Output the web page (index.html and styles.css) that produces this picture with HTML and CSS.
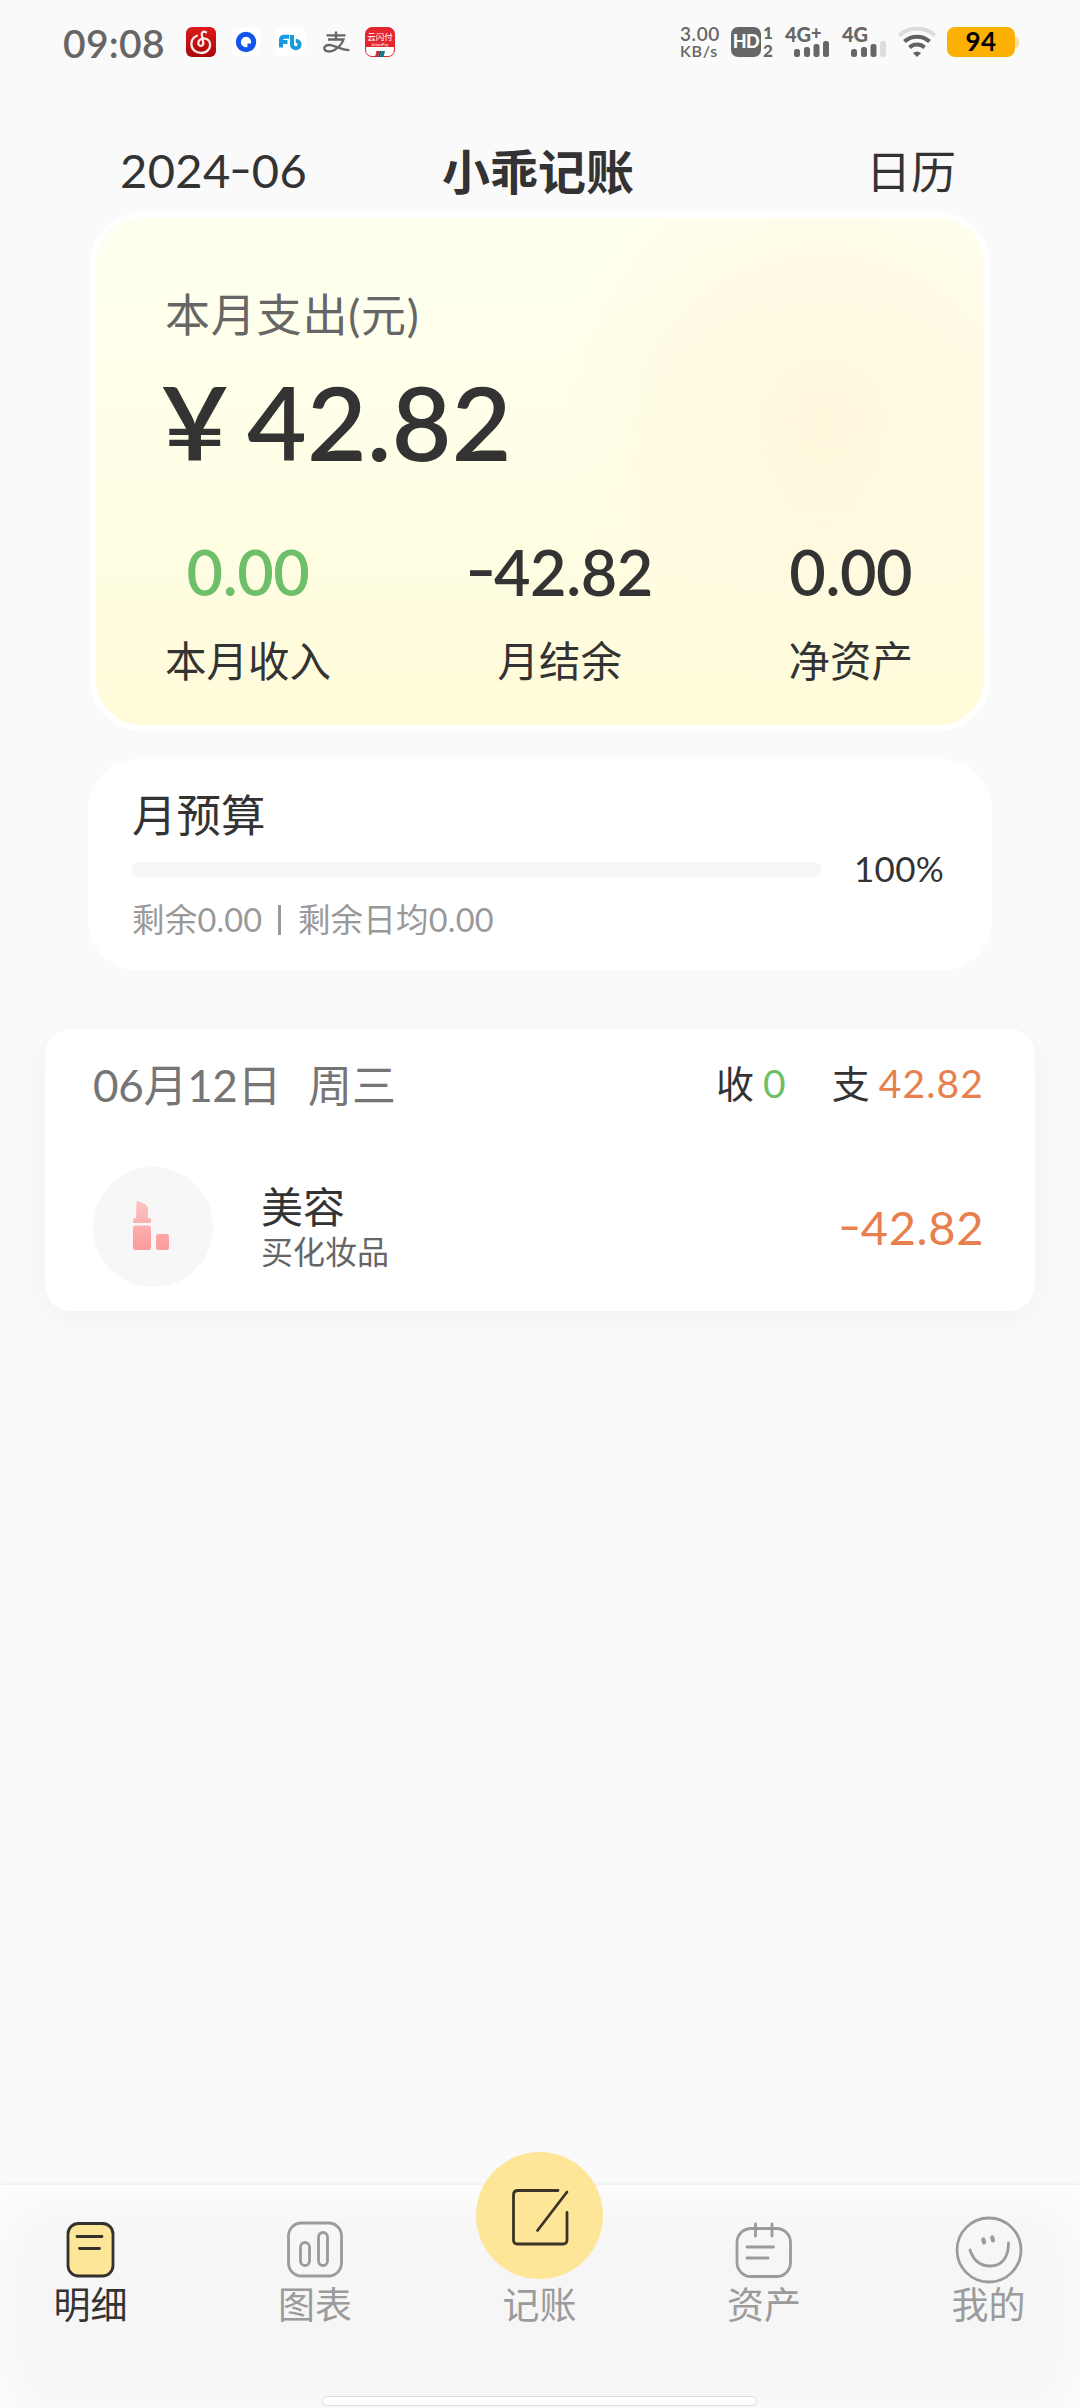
FILE: index.html
```html
<!DOCTYPE html>
<html lang="zh-CN">
<head>
<meta charset="utf-8">
<title>小乖记账</title>
<link rel="stylesheet" href="styles.css">
</head>
<body>
<div class="screen">
  <div class="status">
    <span class="clock">09:08</span>
    <div class="notices">
      <svg class="n-music" width="30" height="30" viewBox="0 0 30 30"><defs><linearGradient id="red" x1="0" y1="0" x2="0" y2="1"><stop offset="0" stop-color="#dc1a1a"/><stop offset="1" stop-color="#a80a0a"/></linearGradient></defs><rect width="30" height="30" rx="6" fill="url(#red)"/><path d="M20 5.3c-2.400-1.600-4.700-.2-4.200 2.500l1.500 8.300c.5 3.300-4.700 3.900-5 .3-.2-3 2.300-5 5.600-5 4.100.2 6.600 3.200 6.200 7.200-.5 4.500-4.300 7.400-8.900 7.400-5.700 0-9.800-3.900-9.800-9 0-3.700 2.100-6.900 5.500-8.200" fill="none" stroke="#fbe9e9" stroke-width="2.300" stroke-linecap="round"/></svg>
      <svg class="n-ring" width="28" height="28" viewBox="0 0 28 28"><rect width="28" height="28" rx="5" fill="#fff"/><circle cx="14" cy="14" r="10.200" fill="#1355ea"/><path d="M14 8.800a5.200 5.200 0 1 0 1.500 10.200v-3.500h3.500A5.200 5.200 0 0 0 14 8.800z" fill="#fff"/></svg>
      <svg class="n-fb" width="30" height="28" viewBox="0 0 30 28"><rect width="30" height="28" rx="5" fill="#fff"/><path d="M6 19.500V12q0-3.300 3.300-3.300h5M7 14h5.500M17 7v9.500a3.800 3.800 0 1 0 3.800-3.800" fill="none" stroke="#189bdc" stroke-width="4"/></svg>
      <svg class="n-pay" width="28" height="22" viewBox="0 0 28 22"><path d="M4.500 4.300h19M14 .5v8M6 8.500h15.500c-1.500 4.500-5 8-9 10.500-4 2.200-9 2-10-.8-.8-2.800 2.500-4.800 6.300-4 5.500 1.200 11 4.800 18.500 5" fill="none" stroke="#666" stroke-width="2.300"/></svg>
      <span class="n-union"><span class="u-name">云闪付</span><span class="u-sub">UnionPay</span><svg width="10" height="6" viewBox="0 0 10 6"><path d="M1.500 0h3L3 6H0z" fill="#d7262e"/><path d="M4.500 0h2L5 6H3z" fill="#1a4a86"/><path d="M6.500 0H10L8.500 6H5z" fill="#107a80"/></svg></span>
    </div>
    <div class="signals">
      <span class="speed"><b>3.00</b><i>KB/s</i></span>
      <span class="hd"><span>HD</span></span>
      <span class="sims"><b>1</b><b>2</b></span>
      <span class="cell cell-a"><b>4G<sup>+</sup></b><svg width="36" height="16" viewBox="0 0 36 16" fill="#666"><rect x="0" y="8" width="6" height="8" rx="2.500"/><rect x="10" y="6" width="6" height="10" rx="2.500"/><rect x="19.500" y="3" width="6" height="13" rx="2.500"/><rect x="29" y="0" width="6" height="16" rx="2.500"/></svg></span>
      <span class="cell cell-b"><b>4G</b><svg width="36" height="16" viewBox="0 0 36 16" fill="#666"><rect x="0" y="8" width="6" height="8" rx="2.500"/><rect x="10" y="6" width="6" height="10" rx="2.500"/><rect x="19.500" y="3" width="6" height="13" rx="2.500"/><rect x="29" y="0" width="6" height="16" rx="2.500" fill="#dcdcdc"/></svg></span>
      <svg class="wifi" width="38" height="30" viewBox="0 0 38 30" fill="none" stroke-width="4"><path d="M1.200 8.500a26 26 0 0 1 35.600 0" stroke="#dcdcdc"/><path d="M6.500 14.500a18.500 18.500 0 0 1 25 0M11.500 20.500a11 11 0 0 1 15 0" stroke="#606060"/><path d="M15 26q4-3 8 0l-4 4z" fill="#606060" stroke="none"/></svg>
      <span class="battery">94</span><span class="nub"></span>
    </div>
  </div>

  <header class="top">
    <span class="month">2024<span class="dash">-</span>06</span>
    <h1>小乖记账</h1>
    <span class="calendar">日历</span>
  </header>

  <section class="summary">
    <p class="caption">本月支出(元)</p>
    <p class="total"><span class="yen">¥</span><span>42.82</span></p>
    <div class="stats">
      <div class="stat"><b class="green">0.00</b><span class="name">本月收入</span></div>
      <div class="stat"><b><span class="dash">-</span>42.82</b><span class="name">月结余</span></div>
      <div class="stat"><b>0.00</b><span class="name">净资产</span></div>
    </div>
  </section>

  <section class="budget">
    <h2>月预算</h2>
    <div class="progress"><div class="track"></div><span>100%</span></div>
    <p class="left"><span>剩余0.00</span><i></i><span>剩余日均0.00</span></p>
  </section>

  <section class="day">
    <div class="day-head">
      <span class="date">06月12日</span><span class="week">周三</span>
      <span class="sum in">收<em>0</em></span><span class="sum out">支<em>42.82</em></span>
    </div>
    <div class="entry">
      <span class="avatar"><svg width="40" height="50" viewBox="0 0 40 50"><defs><linearGradient id="pink" gradientUnits="userSpaceOnUse" x1="0" y1="0" x2="0" y2="50"><stop offset="0" stop-color="#fcc4c2"/><stop offset="1" stop-color="#fb9a9b"/></linearGradient></defs><g fill="url(#pink)"><path d="M4.500.8Q4.500 0 5.300.3C10 1.700 16 3.200 16 8v9h1q2 0 2 2v1.500q0 1.500-1.500 1.500h-15Q1 22 1 20.500V19q0-2 2-2h1z"/><rect x="1" y="24.500" width="18" height="24.500" rx="2.500"/><rect x="24" y="33" width="13" height="16" rx="2.500"/></g></svg></span>
      <div class="what"><span class="kind">美容</span><span class="note">买化妆品</span></div>
      <span class="amount"><span class="dash">-</span>42.82</span>
    </div>
  </section>

  <nav class="tabs">
    <a class="tab active"><span class="icon"><svg width="50" height="58" viewBox="0 0 50 58" fill="none" stroke="#33312c" stroke-width="2.800" stroke-linecap="round"><rect x="2" y="2.500" width="45" height="52.500" rx="10.500" fill="#fde698"/><path d="M11 15.500h25M13.500 27.500h20"/></svg></span>明细</a>
    <a class="tab"><span class="icon"><svg width="58" height="58" viewBox="0 0 58 58" fill="none" stroke="#9b9b9b" stroke-width="2.800"><rect x="2.500" y="2" width="53" height="53" rx="13"/><rect x="14.500" y="21.500" width="9" height="23" rx="4.500"/><rect x="32.500" y="11.500" width="9" height="33" rx="4.500"/></svg></span>图表</a>
    <a class="tab add"><span class="icon"><span class="disc"><svg width="60" height="60" viewBox="0 0 60 60" fill="none" stroke="#393425" stroke-width="2.800" stroke-linecap="round"><path d="M48 3.500H8Q3.500 3.500 3.500 8v45q0 4 4 4H53q4 0 4-4V25.500M57 5L27.500 43.500"/></svg></span></span>记账</a>
    <a class="tab"><span class="icon"><svg width="58" height="58" viewBox="0 0 58 58" fill="none" stroke="#9b9b9b" stroke-width="2.800" stroke-linecap="round"><rect x="2" y="7.500" width="53.500" height="48" rx="14"/><path d="M20.500 3v12M37 3v12M12 26h26.500M12 37h21"/></svg></span>资产</a>
    <a class="tab"><span class="icon"><svg width="68" height="68" viewBox="0 0 68 68" fill="none" stroke="#9b9b9b" stroke-width="2.800" stroke-linecap="round"><circle cx="34" cy="34" r="32"/><path d="M15 34c3.500 10.500 11 16 20 16 12.500 0 18.500-9.500 18.500-23"/><path d="M28.300 23.500l.8 2.800M37.200 21.500l.8 2.800" stroke-width="4.200"/></svg></span>我的</a>
    <span class="home"></span>
  </nav>
</div>
</body>
</html>
```
FILE: styles.css
```css
* { box-sizing: border-box; margin: 0; padding: 0; }
body { background: #fafafa; color: #333; font-family: Lato, "Noto Sans CJK SC", sans-serif; }
svg { display: block; flex: none; }
b, em, i { font-style: normal; }
.screen { width: 1080px; height: 2408px; display: flex; flex-direction: column; overflow: hidden; background: #fafafa; }
.dash { display: inline-block; margin: 0 .035em; transform: translateY(-.07em) scaleX(1.35); }

/* status bar */
.status { height: 84px; padding: 27px 61px 27px 63px; display: flex; justify-content: space-between; }
.clock { width: 123px; font-size: 39px; font-weight: 600; line-height: 32px; color: #666; letter-spacing: .3px; }
.notices { display: flex; align-items: center; height: 30px; flex: 1; }
.n-ring { margin-left: 16px; }
.n-fb { margin-left: 15px; }
.n-pay { margin-left: 17px; }
.n-union { width: 30px; height: 30px; margin-left: 15px; border-radius: 7px; border: 1px solid #e0262d; display: flex; flex-direction: column; align-items: center; background: linear-gradient(#e5262e 0 19px, #fff 19px); color: #fff; white-space: nowrap; }
.u-name { font-size: 8.5px; line-height: 11px; margin-top: 4px; }
.u-sub { font-size: 4px; line-height: 4px; margin-bottom: 4px; }
.signals { display: flex; height: 30px; color: #666; }
.speed { display: flex; flex-direction: column; width: 51px; }
.speed b { font-size: 19px; font-weight: 600; line-height: 14px; letter-spacing: .6px; }
.speed i { font-size: 16px; font-weight: 600; line-height: 15px; padding-top: 2px; letter-spacing: .8px; }
.hd { width: 30px; height: 30px; border-radius: 7px; background: #666; color: #fff; font-size: 18px; font-weight: 900; line-height: 29px; text-align: center; letter-spacing: -.5px; }
.sims { width: 24px; padding-left: 2px; display: flex; flex-direction: column; justify-content: space-between; }
.sims b { font-size: 17px; line-height: 12px; font-weight: 900; }
.cell { width: 57px; display: flex; flex-direction: column; }
.cell b { font-size: 20px; line-height: 14px; height: 15px; font-weight: 900; }
.cell sup { font-size: 18px; line-height: 1px; vertical-align: 2px; }
.cell svg { margin-left: 9px; }
.cell-b { width: 56px; }
.wifi { margin-right: 11px; }
.battery { width: 68px; height: 30px; border-radius: 8px; background: #fdb004; color: #000; font-size: 26px; font-weight: 700; line-height: 29px; text-align: center; letter-spacing: .5px; }
.nub { width: 4px; height: 11px; margin-top: 10px; border-radius: 0 4px 4px 0; background: #f6dfa6; }

/* title row */
.top { height: 128px; padding: 54px 124px 0 120px; display: grid; grid-template-columns: 1fr auto 1fr; line-height: 68px; }
.month { font-size: 47px; line-height: 65px; letter-spacing: .4px; }
.top h1 { font-size: 48px; font-weight: 700; }
.calendar { font-size: 45px; text-align: right; }

/* monthly summary */
.summary { width: 900px; height: 519px; margin-left: 90px; padding: 67px 71px 0 69px; border: 6px solid #fff; border-radius: 52px; background: radial-gradient(circle at 82% 40%, rgba(255,246,218,.8) 0, rgba(255,248,222,.6) 19%, rgba(255,250,224,0) 34%), linear-gradient(180deg, #fffff0 0, #ffffe8 45%, #fffbd9 100%); }
.caption { font-size: 45px; line-height: 60px; color: #666; letter-spacing: .8px; }
.total { display: flex; font-size: 103px; font-weight: 600; line-height: 106px; margin-top: 23px; margin-left: -4px; letter-spacing: .3px; }
.yen { width: 86px; transform: scaleX(1.13); transform-origin: left; }
.stats { display: flex; justify-content: space-between; margin-top: 60px; }
.stat { display: flex; flex-direction: column; align-items: center; }
.stat b { font-size: 63px; font-weight: 600; line-height: 76px; letter-spacing: -.4px; }
.name { font-size: 41.500px; line-height: 60px; margin-top: 21px; }
.green { color: #6dbf69; }

/* budget */
.budget { width: 904px; height: 211px; margin: 28px 0 0 88px; padding: 26px 44px 0; border-radius: 50px; background: #fff; }
.budget h2 { font-size: 44.500px; font-weight: 400; line-height: 60px; }
.progress { display: flex; align-items: center; height: 48px; }
.track { width: 689px; height: 15px; margin-right: 33px; border-radius: 7px; background: #f6f6f6; }
.progress span { font-size: 35px; line-height: 44px; padding-bottom: 2px; letter-spacing: .3px; }
.left { display: flex; align-items: center; font-size: 32.500px; line-height: 54px; color: #999; letter-spacing: .2px; }
.left i { width: 2.500px; height: 30px; margin: 0 17px 0 16px; background: #999; }

/* day list */
.day { width: 990px; height: 282px; margin: 59px 0 0 45px; padding: 26px 51px 0 48px; border-radius: 26px; background: #fff; box-shadow: 0 6px 30px rgba(0,0,0,.045); }
.day-head { display: flex; align-items: center; height: 60px; }
.date, .week { font-size: 44px; line-height: 60px; color: #757575; }
.date { width: 215px; letter-spacing: -.3px; }
.sum { display: flex; align-items: baseline; font-size: 38px; line-height: 56px; padding-bottom: 4px; }
.in { margin-left: auto; }
.out { margin-left: 45px; }
.sum em { margin-left: 9px; color: #e8804e; font-size: 39px; letter-spacing: 1.100px; }
.sum.in em { color: #6dbf69; }
.entry { display: flex; align-items: center; height: 120px; margin-top: 52px; }
.avatar { width: 120px; height: 120px; border-radius: 50%; background: #f7f7f7; padding: 34px 0 0 39px; }
.what { display: flex; flex-direction: column; margin-left: 48px; }
.kind { font-size: 42px; line-height: 50px; }
.note { font-size: 32px; line-height: 40px; color: #666; }
.amount { margin-left: auto; font-size: 47px; color: #e8804e; letter-spacing: .6px; }

/* bottom tabs */
.tabs { position: relative; margin-top: auto; height: 223px; padding: 0 54px 0 53px; display: flex; justify-content: space-between; background: #f6f6f6; box-shadow: 0 -1px 3px rgba(0,0,0,.06), inset 0 12px 60px #fff; }
.tab { width: 75px; display: flex; flex-direction: column; align-items: center; font-size: 37px; line-height: 50px; color: #9b9b9b; white-space: nowrap; }
.active { color: #333; }
.icon { height: 68px; margin: 31px 0 -4px; display: flex; align-items: center; justify-content: center; }
.disc { flex: none; width: 127px; height: 127px; border-radius: 50%; background: #fde698; display: flex; align-items: center; justify-content: center; margin-top: -69px; padding-top: 3px; }
.home { position: absolute; left: 322px; bottom: 2px; width: 435px; height: 10px; border: 1px solid #dedede; border-radius: 5px; background: #fff; }
```
